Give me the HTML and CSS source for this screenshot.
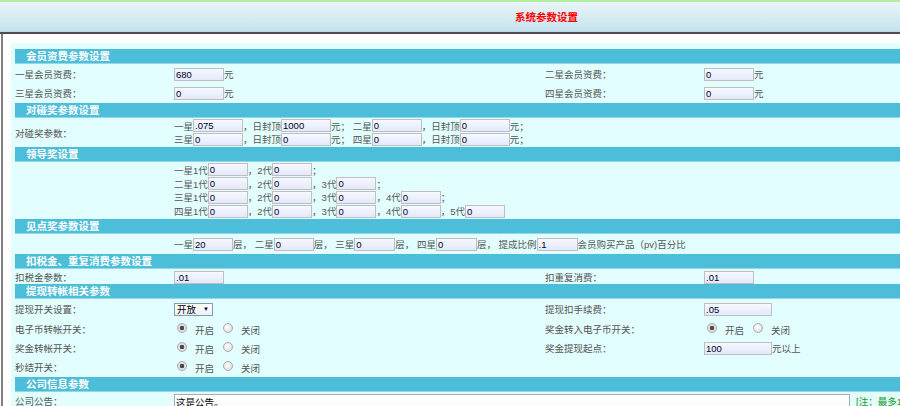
FILE: index.html
```html
<!DOCTYPE html>
<html lang="zh-CN">
<head>
    <meta charset="UTF-8">
    <title>系统参数设置</title>
    <link rel="stylesheet" href="styles.css">
</head>
<body>
    <div class="top"><h1>系统参数设置</h1></div>
    <div class="main">
        <div class="panel">
            <div class="bar">会员资费参数设置</div>
            <div class="row">
                <span>一星会员资费：</span>
                <div class="cell"><input class="txt w50" value="680">元</div>
                <span>二星会员资费：</span>
                <div class="cell"><input class="txt w50" value="0">元</div>
            </div>
            <div class="row">
                <span>三星会员资费：</span>
                <div class="cell"><input class="txt w50" value="0">元</div>
                <span>四星会员资费：</span>
                <div class="cell"><input class="txt w50" value="0">元</div>
            </div>

            <div class="bar">对碰奖参数设置</div>
            <div class="row wide auto">
                <span>对碰奖参数：</span>
                <div class="lines pair">
                    <div>一星<input class="txt w50" value=".075">，日封顶<input class="txt w50" value="1000">元； 二星<input class="txt w50" value="0">，日封顶<input class="txt w50" value="0">元；</div>
                    <div>三星<input class="txt w50" value="0">，日封顶<input class="txt w50" value="0">元； 四星<input class="txt w50" value="0">，日封顶<input class="txt w50" value="0">元；</div>
                </div>
            </div>

            <div class="bar">领导奖设置</div>
            <div class="row wide auto">
                <span></span>
                <div class="lines quad">
                    <div>一星1代<input class="txt w40" value="0">，2代<input class="txt w40" value="0">；</div>
                    <div>二星1代<input class="txt w40" value="0">，2代<input class="txt w40" value="0">，3代<input class="txt w40" value="0">；</div>
                    <div>三星1代<input class="txt w40" value="0">，2代<input class="txt w40" value="0">，3代<input class="txt w40" value="0">，4代<input class="txt w40" value="0">；</div>
                    <div>四星1代<input class="txt w40" value="0">，2代<input class="txt w40" value="0">，3代<input class="txt w40" value="0">，4代<input class="txt w40" value="0">，5代<input class="txt w40" value="0"></div>
                </div>
            </div>

            <div class="bar">见点奖参数设置</div>
            <div class="row wide">
                <span></span>
                <div class="cell">一星<input class="txt w40" value="20">层， 二星<input class="txt w40" value="0">层， 三星<input class="txt w41" value="0">层， 四星<input class="txt w41" value="0">层， 提成比例<input class="txt w41" value=".1"> 会员购买产品（pv)百分比</div>
            </div>

            <div class="bar">扣税金、重复消费参数设置</div>
            <div class="row short">
                <span>扣税金参数：</span>
                <div class="cell"><input class="txt w50" value=".01"></div>
                <span>扣重复消费：</span>
                <div class="cell"><input class="txt w50" value=".01"></div>
            </div>

            <div class="bar">提现转帐相关参数</div>
            <div class="row">
                <span>提现开关设置：</span>
                <div class="cell"><span class="sel"><select><option>开放</option><option>关闭</option></select></span></div>
                <span>提现扣手续费：</span>
                <div class="cell"><input class="txt w68" value=".05"></div>
            </div>
            <div class="row tall">
                <span>电子币转帐开关：</span>
                <div class="cell radios"><input type="radio" name="r1" checked><span>开启</span><input type="radio" name="r1"><span>关闭</span></div>
                <span>奖金转入电子币开关：</span>
                <div class="cell radios"><input type="radio" name="r2" checked><span>开启</span><input type="radio" name="r2"><span>关闭</span></div>
            </div>
            <div class="row">
                <span>奖金转帐开关：</span>
                <div class="cell radios"><input type="radio" name="r3" checked><span>开启</span><input type="radio" name="r3"><span>关闭</span></div>
                <span>奖金提现起点：</span>
                <div class="cell"><input class="txt w68" value="100">元以上</div>
            </div>
            <div class="row">
                <span>秒结开关：</span>
                <div class="cell radios"><input type="radio" name="r4" checked><span>开启</span><input type="radio" name="r4"><span>关闭</span></div>
                <span></span>
                <span></span>
            </div>

            <div class="bar">公司信息参数</div>
            <div class="row memo">
                <span>公司公告：</span>
                <textarea>这是公告。</textarea>
                <span class="note">[注：最多100字]</span>
            </div>
        </div>
    </div>
</body>
</html>
```

FILE: styles.css
```css
*{margin:0;padding:0;}
html,body{width:100%;height:100%;overflow:hidden;}
body{
    font-family:"Liberation Sans","Noto Sans CJK SC",sans-serif;
    font-size:9.5px;
    color:#555;
    background:#fff;
}
.top{
    height:30px;
    border-top:2px solid #b3efa0;
    border-bottom:2px solid #4d4d4d;
    background:linear-gradient(#eaf6f9,#c4e2ed);
    box-shadow:inset 0 -1px #b6dcea;
}
.top h1{
    padding-left:515px;
    line-height:30px;
    font-size:10.5px;
    font-weight:bold;
    color:#f00;
}
.main{
    margin-left:1px;
    border-left:2px solid #808080;
    padding:9px 0 0 8px;
    min-height:400px;
}
.panel{
    display:flex;
    flex-direction:column;
    gap:1px;
    padding:6px 0 80px 4px;
    background:#e2fefe;
}
.bar{
    height:14px;
    line-height:14px;
    border-bottom:1px solid #92d8ea;
    padding-left:11px;
    background:#4cbed9;
    color:#fff;
    font-size:10.5px;
    font-weight:bold;
}
.row{
    display:grid;
    grid-template-columns:159px 371px 159px 1fr;
    align-items:center;
    height:18px;
    white-space:nowrap;
}
.row.tall{height:19px;}
.row.wide{grid-template-columns:159px 1fr;}
.row.auto{height:auto;}
.row.short{height:13px;}
.row.memo{grid-template-columns:159px 682px 1fr;align-items:start;height:60px;padding-top:1px;}
.cell{display:flex;align-items:center;}
.lines > div{display:flex;align-items:center;}
.lines.pair > div{height:13.5px;}
.lines.quad > div{height:13.75px;}

.txt{
    box-sizing:border-box;
    height:13px;
    border:1px solid #bfbfbf;
    padding:0 1px;
    font:9.5px "Liberation Sans",sans-serif;
    color:#00002a;
    background:linear-gradient(#f7f9ff,#e3e8fb);
    outline:none;
}
.w40{width:40px;}
.w41{width:41px;}
.w50{width:50px;}
.w68{width:68px;}

.sel{position:relative;display:inline-block;}
.sel select{
    appearance:none;
    box-sizing:border-box;
    width:39px;
    height:13px;
    border:1px solid #7f9db9;
    padding:0 0 0 2px;
    font:9.5px "Noto Sans CJK SC",sans-serif;
    line-height:11px;
    color:#000;
    background:linear-gradient(#fff,#eef2fb);
}
.sel:after{
    content:"▼";
    position:absolute;
    right:4px;
    top:2px;
    font-size:6px;
    line-height:9px;
    color:#000;
    pointer-events:none;
}

.radios input{
    appearance:none;
    width:10px;
    height:10px;
    border-radius:50%;
    border:1px solid #aaa;
    background:radial-gradient(circle at 40% 40%,#fff,#d6d6d6);
    margin:0 0 2px 3px;
}
.radios span + input{margin-left:9px;}
.radios input:checked{
    background:radial-gradient(circle,#4a4a4a 0 2px,#e6e6e6 2.6px,#d0d0d0);
}
.radios span{margin:2px 0 0 8px;}

textarea{
    box-sizing:border-box;
    width:676px;
    height:50px;
    border:1px solid #aaa;
    padding:0 1px;
    font:9.5px "Noto Sans CJK SC",sans-serif;
    color:#000;
    background:linear-gradient(#fff,#eef0fb);
    resize:none;
}
.note{color:#1a9a1a;}
```
